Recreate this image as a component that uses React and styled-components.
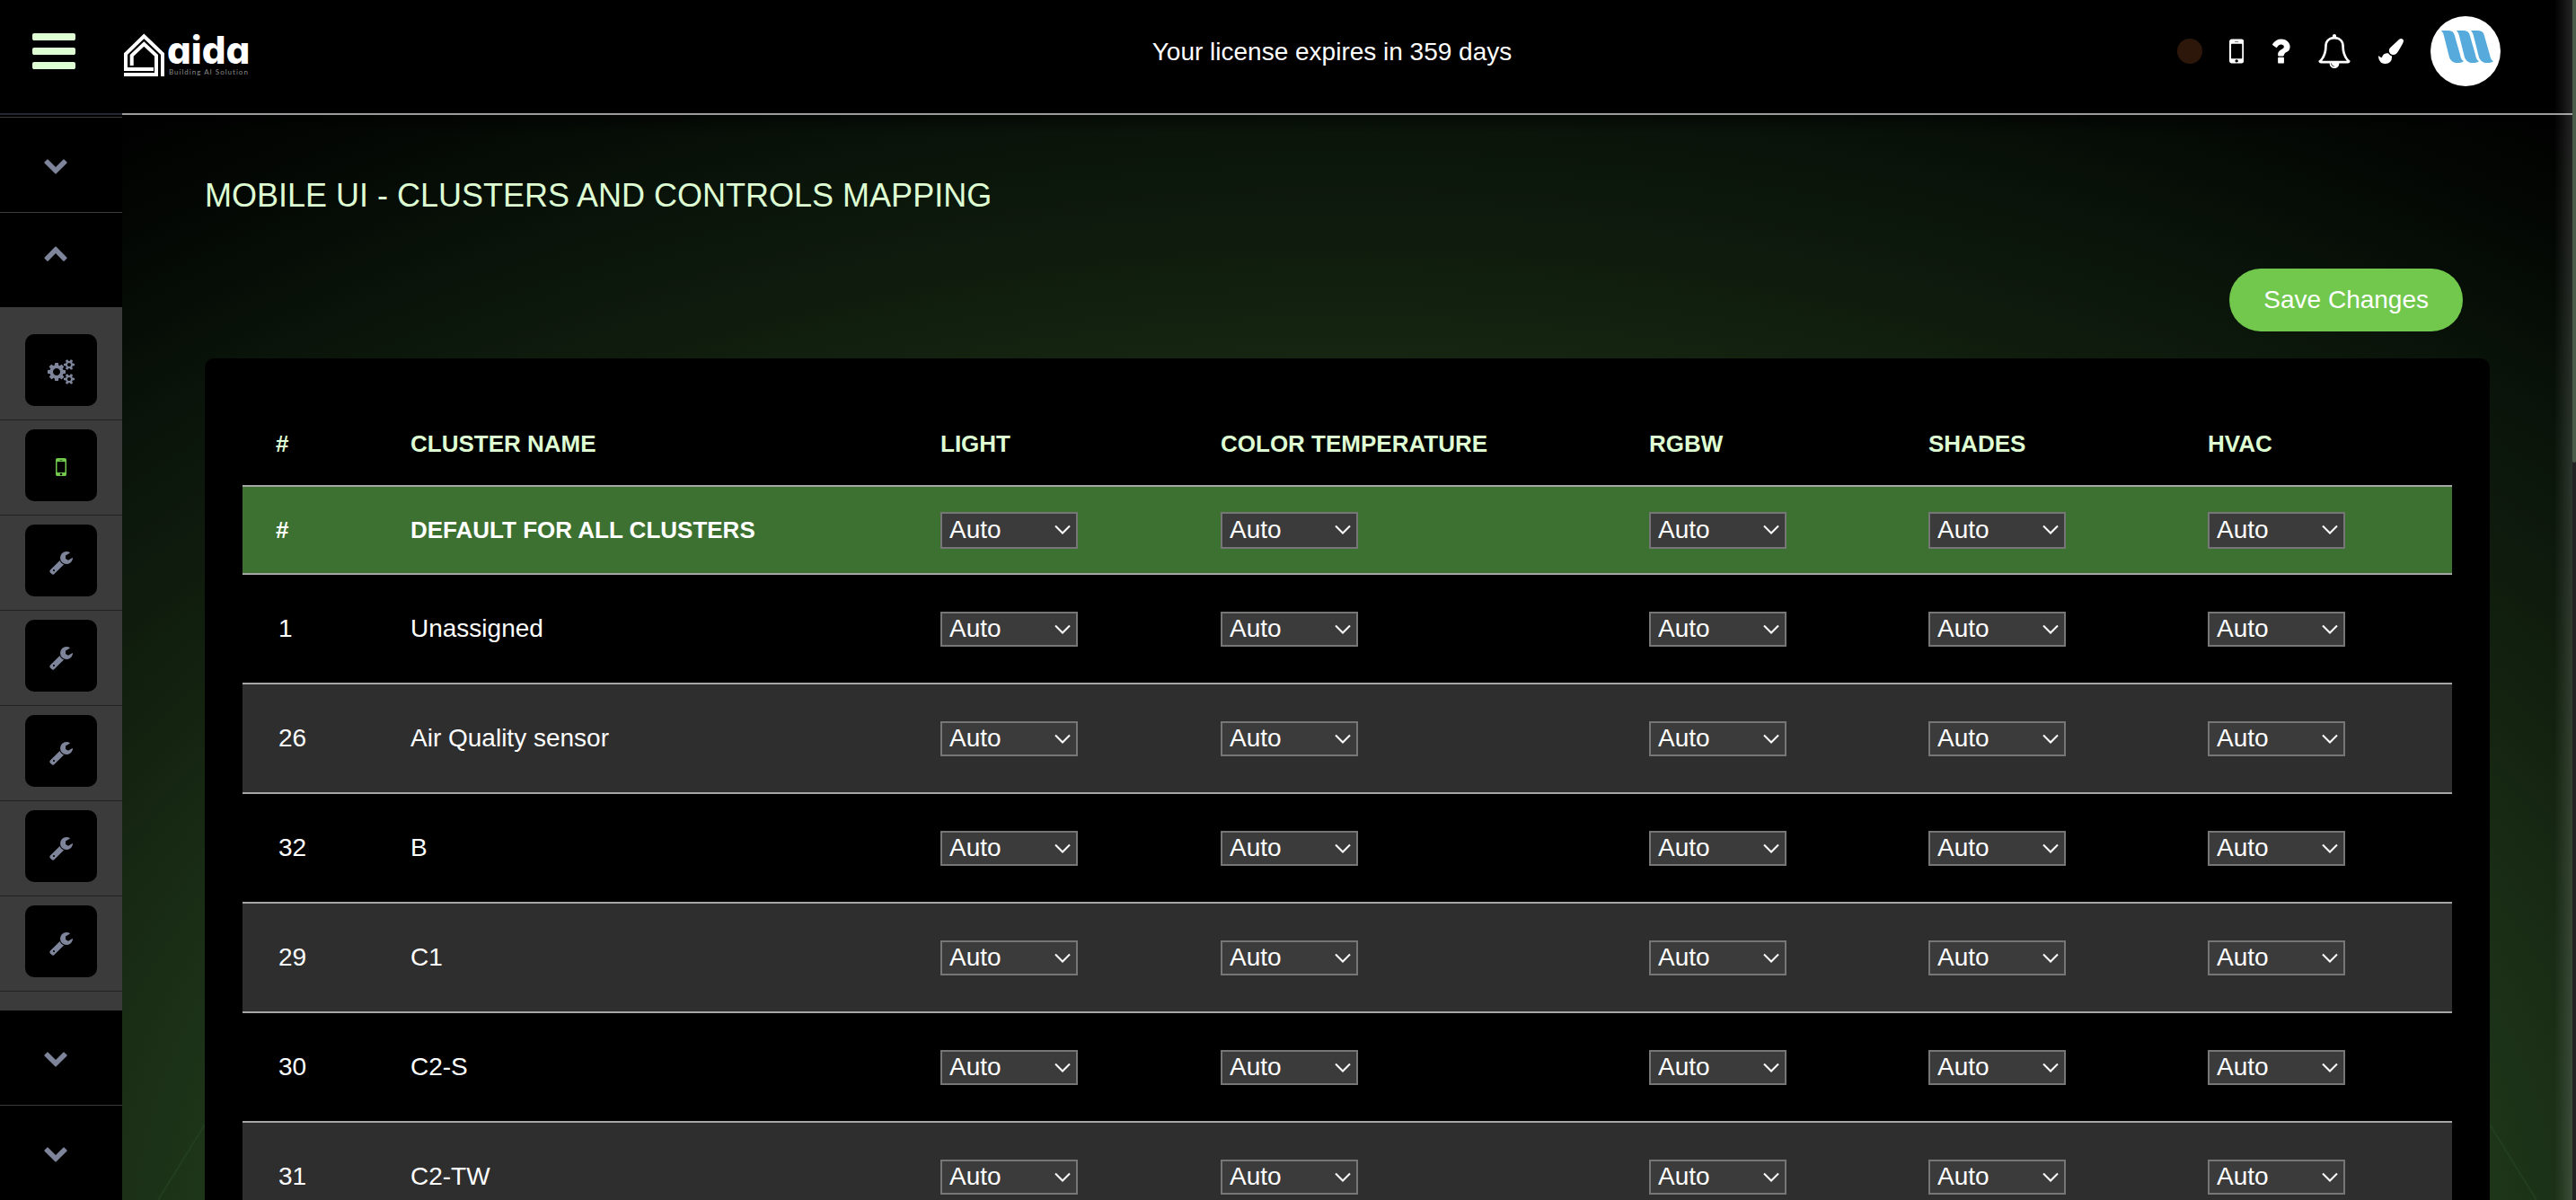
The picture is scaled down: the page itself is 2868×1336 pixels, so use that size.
import React from 'react';
import styled, { createGlobalStyle, css } from 'styled-components';

const GlobalStyle = createGlobalStyle`
  *, *::before, *::after { box-sizing: border-box; }
  body {
    margin: 0;
    background: #000;
    color: #fff;
    font-family: "Liberation Sans", Arial, Helvetica, sans-serif;
    font-size: 28px;
    line-height: 32px;
  }
`;

/* ---------- icons ---------- */

const ICONS = {
  bars: {
    box: '128 0 1536 1792',
    d: 'M1664 1344v128q0 26-19 45t-45 19h-1408q-26 0-45-19t-19-45v-128q0-26 19-45t45-19h1408q26 0 45 19t19 45zm0-512v128q0 26-19 45t-45 19h-1408q-26 0-45-19t-19-45v-128q0-26 19-45t45-19h1408q26 0 45 19t19 45zm0-512v128q0 26-19 45t-45 19h-1408q-26 0-45-19t-19-45v-128q0-26 19-45t45-19h1408q26 0 45 19t19 45z',
  },
  down: {
    box: '0 0 1792 1792',
    d: 'M1683 808l-742 741q-19 19-45 19t-45-19l-742-741q-19-19-19-45.5t19-45.5l166-165q19-19 45-19t45 19l531 531 531-531q19-19 45-19t45 19l166 165q19 19 19 45.5t-19 45.5z',
  },
  up: {
    box: '0 0 1792 1792',
    d: 'M1683 1331l-166 165q-19 19-45 19t-45-19l-531-531-531 531q-19 19-45 19t-45-19l-166-165q-19-19-19-45.5t19-45.5l742-741q19-19 45-19t45 19l742 741q19 19 19 45.5t-19 45.5z',
  },
  mobile: {
    box: '512 0 768 1792',
    d: 'M976 1408q0-33-23.5-56.5t-56.5-23.5-56.5 23.5-23.5 56.5 23.5 56.5 56.5 23.5 56.5-23.5 23.5-56.5zm208-160v-704q0-13-9.5-22.5t-22.5-9.5h-512q-13 0-22.5 9.5t-9.5 22.5v704q0 13 9.5 22.5t22.5 9.5h512q13 0 22.5-9.5t9.5-22.5zm-192-848q0-16-16-16h-160q-16 0-16 16t16 16h160q16 0 16-16zm288-16v1024q0 52-38 90t-90 38h-512q-52 0-90-38t-38-90v-1024q0-52 38-90t90-38h512q52 0 90 38t38 90z',
  },
  question: {
    box: '384 0 1024 1792',
    d: 'M1088 1256v240q0 16-12 28t-28 12h-240q-16 0-28-12t-12-28v-240q0-16 12-28t28-12h240q16 0 28 12t12 28zm316-600q0 54-15.5 101t-35 76.5-55 59.5-57.5 43.5-61 35.5q-41 23-68.5 65t-27.5 67q0 17-12 32.5t-28 15.5h-240q-15 0-25.5-18.5t-10.5-37.5v-45q0-83 65-156.5t143-108.5q59-27 84-56t25-76q0-42-46.5-74t-107.5-32q-65 0-108 29-35 25-107 115-13 16-31 16-12 0-25-8l-164-125q-13-10-15.5-25t5.5-28q160-266 464-266 80 0 161 31t146 83 106 127.5 41 158.5z',
  },
  bell: {
    box: '0 0 1792 1792',
    d: 'M912 1696q0-16-16-16-59 0-101.5-42.5t-42.5-101.5q0-16-16-16t-16 16q0 73 51.5 124.5t124.5 51.5q16 0 16-16zm-666-288h1300q-266-300-266-832 0-51-24-105t-69-103-121.5-80.5-169.5-31.5-169.5 31.5-121.5 80.5-69 103-24 105q0 532-266 832zm1482 0q0 52-38 90t-90 38h-448q0 106-75 181t-181 75-181-75-75-181h-448q-52 0-90-38t-38-90q50-42 91-88t85-119.5 74.5-158.5 50-206 19.5-260q0-152 117-282.5t307-158.5q-8-19-8-39 0-40 28-68t68-28 68 28 28 68q0 20-8 39 190 28 307 158.5t117 282.5q0 139 19.5 260t50 206 74.5 158.5 85 119.5 91 88z',
  },
  brush: {
    box: '0 0 1792 1792',
    d: 'M1615 0q70 0 122.5 46.5t52.5 116.5q0 63-45 151-332 629-465 752-97 91-218 91-126 0-216.5-92.5t-90.5-219.5q0-128 92-212l638-579q59-54 130-54zm-909 1034q39 76 106.5 130t150.5 76l1 71q4 213-129.5 347t-348.5 134q-123 0-218-46.5t-152.5-127.5-86.5-183-29-220q7 5 41 30t62 44.5 59 36.5 46 17q41 0 55-37 25-66 57.5-112.5t69.5-76 88-47.5 103-25.5 125-10.5z',
  },
  wrench: {
    box: '0 0 1792 1792',
    d: 'M448 1472q0-26-19-45t-45-19-45 19-19 45 19 45 45 19 45-19 19-45zm644-420l-682 682q-37 37-90 37-52 0-91-37l-106-108q-38-36-38-90 0-53 38-91l681-681q39 98 114.5 173.5t173.5 114.5zm634-435q0 39-23 106-47 134-164.5 217.5t-258.5 83.5q-185 0-316.5-131.5t-131.5-316.5 131.5-316.5 316.5-131.5q58 0 121.5 16.5t107.5 46.5q16 11 16 28t-16 28l-293 169v224l193 107q5-3 79-48.5t135.5-81 70.5-35.5q15 0 23.5 10t8.5 25z',
  },
  cogs: {
    box: '-64 0 1920 1792',
    d: 'M832 896q0-106-75-181t-181-75-181 75-75 181 75 181 181 75 181-75 75-181zm768 512q0-52-38-90t-90-38-90 38-38 90q0 53 37.5 90.5t90.5 37.5 90.5-37.5 37.5-90.5zm0-1024q0-52-38-90t-90-38-90 38-38 90q0 53 37.5 90.5t90.5 37.5 90.5-37.5 37.5-90.5zm-384 421v185q0 10-7 19.5t-16 10.5l-155 24q-11 35-32 76 34 48 90 115 7 11 7 20 0 12-7 19-23 30-82.5 89.5t-78.5 59.5q-11 0-21-7l-115-90q-37 19-77 31-11 108-23 155-7 24-30 24h-186q-11 0-20-7.5t-10-17.5l-23-153q-34-10-75-31l-118 89q-7 7-20 7-11 0-21-8-144-133-144-160 0-9 7-19 10-14 41-53t47-61q-23-44-35-82l-152-24q-10-1-17-9.5t-7-19.5v-185q0-10 7-19.5t16-10.5l155-24q11-35 32-76-34-48-90-115-7-11-7-20 0-12 7-20 22-30 82-89t79-59q11 0 21 7l115 90q34-18 77-32 11-108 23-154 7-24 30-24h186q11 0 20 7.5t10 17.5l23 153q34 10 75 31l118-89q8-7 20-7 11 0 21 8 144 133 144 160 0 8-7 19-12 16-42 54t-45 60q23 48 34 82l152 23q10 2 17 10.5t7 19.5zm640 533v140q0 16-149 31-12 27-30 52 51 113 51 138 0 4-4 7-122 71-124 71-8 0-46-47t-52-68q-20 2-30 2t-30-2q-14 21-52 68t-46 47q-2 0-124-71-4-3-4-7 0-25 51-138-18-25-30-52-149-15-149-31v-140q0-16 149-31 13-29 30-52-51-113-51-138 0-4 4-7 4-2 35-20t59-34 30-16q8 0 46 46.5t52 67.5q20-2 30-2t30 2q51-71 92-112l6-2q4 0 124 70 4 3 4 7 0 25-51 138 17 23 30 52 149 15 149 31zm0-1024v140q0 16-149 31-12 27-30 52 51 113 51 138 0 4-4 7-122 71-124 71-8 0-46-47t-52-68q-20 2-30 2t-30-2q-14 21-52 68t-46 47q-2 0-124-71-4-3-4-7 0-25 51-138-18-25-30-52-149-15-149-31v-140q0-16 149-31 13-29 30-52-51-113-51-138 0-4 4-7 4-2 35-20t59-34 30-16q8 0 46 46.5t52 67.5q20-2 30-2t30 2q51-71 92-112l6-2q4 0 124 70 4 3 4 7 0 25-51 138 17 23 30 52 149 15 149 31z',
  },
};

const Glyph = styled.svg`
  display: block;
  flex: none;
  height: ${(p) => p.$size}px;
  fill: currentColor;
`;

function Icon({ name, size = 28 }) {
  const icon = ICONS[name];
  return (
    <Glyph viewBox={icon.box} $size={size} aria-hidden="true">
      <path d={icon.d} />
    </Glyph>
  );
}

/* ---------- page frame ---------- */

const Page = styled.div`
  display: flex;
  height: 100vh;
  overflow: hidden;
`;

const iconButton = css`
  display: flex;
  align-items: center;
  padding: 0;
  border: 0;
  background: none;
  color: inherit;
  font: inherit;
  cursor: pointer;
`;

/* ---------- sidebar ---------- */

const Sidebar = styled.nav`
  flex: none;
  width: 136px;
  background: #000;
`;

const MenuBar = styled.div`
  display: flex;
  align-items: center;
  justify-content: center;
  height: 128px;
  padding: 0 16px 12px 0;
  border-bottom: 2px solid #242732;
  color: #dffdd3;
`;

const MenuButton = styled.button`
  ${iconButton}
`;

const Groups = styled.div`
  margin-top: 2px;
  border-top: 1px solid #3b3b3b;
`;

const Group = styled.button`
  ${iconButton}
  align-items: flex-start;
  width: 100%;
  height: ${(p) => (p.$open ? 105 : 106)}px;
  padding: ${(p) => (p.$open ? 30 : 38)}px 0 0 48px;
  border-bottom: ${(p) => (p.$open ? 0 : 1)}px solid #3b3b3b;
  color: #7e859b;
`;

const SubMenu = styled.ul`
  margin: 0;
  padding: 20px 0 21px;
  list-style: none;
  background: #3b3b3b;
`;

const SubItem = styled.li`
  display: flex;
  justify-content: center;
  padding: 10px 0 15px;
  border-bottom: 1px solid #222;
`;

const Tile = styled.a`
  display: flex;
  align-items: center;
  justify-content: center;
  width: 80px;
  height: 80px;
  padding-top: 4px;
  border-radius: 10px;
  background: #000;
  color: ${(p) => (p.$active ? '#71c84d' : '#7e859b')};
`;

/* ---------- main column ---------- */

const Main = styled.div`
  position: relative;
  display: flex;
  flex-direction: column;
  flex: 1;
  min-width: 0;
  background: radial-gradient(
    ellipse 2387px 1550px at 50% 1400px,
    #243f1e 30%,
    #1e361a 53%,
    #152511 65%,
    #0f1c0d 73%,
    #0a140a 82%,
    #050b05 89%,
    #000 100%
  );

  &::after {
    content: '';
    position: absolute;
    inset: 0 0 0 auto;
    width: 20px;
    background: linear-gradient(to right, transparent, rgba(255, 255, 255, 0.14));
    pointer-events: none;
  }
`;

const Header = styled.header`
  display: grid;
  grid-template-columns: 406px 1fr 440px;
  align-items: center;
  height: 128px;
  padding-bottom: 12px;
  border-bottom: 2px solid #9c9c9c;
  background: #000;
`;

const Logo = styled.a`
  display: flex;
  align-items: flex-start;
  gap: 3px;
  padding: 8px 0 0 2px;
  color: #fff;
  text-decoration: none;
`;

const LogoText = styled.span`
  display: flex;
  flex-direction: column;
`;

const LogoName = styled.span`
  font: 800 42px/38px Inter, "Liberation Sans", sans-serif;
  font-feature-settings: 'cv11', 'ss04';
`;

const LogoTag = styled.span`
  padding-left: 2px;
  color: #8a8a8a;
  font: 400 8px/10px Lato, "Liberation Sans", sans-serif;
  letter-spacing: 1px;
`;

const License = styled.p`
  margin: 0;
  padding-top: 2px;
  text-align: center;
`;

const Tools = styled.div`
  display: flex;
  align-items: center;
  gap: 30px;
`;

const StatusDot = styled.span`
  width: 28px;
  height: 28px;
  border-radius: 50%;
  background: #2d170a;
`;

const Tool = styled.button`
  ${iconButton}
`;

const Avatar = styled.button`
  ${iconButton}
  width: 78px;
  height: 78px;
  border-radius: 50%;
  background: #fff;
  fill: #56abdc;
`;

const Content = styled.main`
  position: relative;
  flex: 1;
  min-height: 0;
  padding: 68px 92px 0;
  overflow: hidden;
  background: linear-gradient(rgba(0, 0, 0, 0.5), transparent 20px);
`;

const Ray = styled.svg`
  position: absolute;
  bottom: 0;
  ${(p) => p.$side}: 0;
  width: 92px;
  height: 84px;
  stroke: #223e1f;
  stroke-width: 2;
`;

const Title = styled.h1`
  margin: 0;
  color: #dffdd3;
  font-size: 36px;
  font-weight: 400;
  line-height: 44px;
`;

const Actions = styled.div`
  display: flex;
  justify-content: flex-end;
  padding: 59px 30px 30px;
`;

const SaveButton = styled.button`
  height: 70px;
  padding: 0 38px;
  border: 0;
  border-radius: 35px;
  background: #71c84d;
  color: #fff;
  font: inherit;
  cursor: pointer;
`;

const Panel = styled.section`
  position: relative;
  padding: 49px 42px 42px;
  border-radius: 10px;
  background: #000;
`;

const Table = styled.table`
  width: 100%;
  border-collapse: separate;
  border-spacing: 0;
  table-layout: fixed;
  text-align: left;
`;

const HeadCell = styled.th`
  height: 92px;
  padding: 0 0 0 37px;
  color: #dffdd3;
  font-size: 26px;
  white-space: nowrap;
`;

const Row = styled.tr`
  background: ${(p) => p.$bg};
`;

const Cell = styled.td`
  height: ${(p) => (p.$default ? 98 : 122)}px;
  padding: 0 0 0 ${(p) => (p.$number ? 40 : 37)}px;
  border-top: 2px solid #a6a6a6;
  font-size: ${(p) => (p.$default ? 26 : 28)}px;
  font-weight: ${(p) => (p.$default ? 700 : 400)};
  vertical-align: middle;
`;

const SelectBox = styled.div`
  position: relative;
  width: 153px;
`;

const Select = styled.select`
  display: block;
  width: 100%;
  height: ${(p) => (p.$tall ? 41 : 39)}px;
  padding: 0 8px;
  border: 2px solid #767676;
  border-radius: 0;
  background: #3b3b3b;
  color: #fff;
  font: 400 28px/32px "Liberation Sans", Arial, sans-serif;
  appearance: none;
`;

const Caret = styled.svg`
  position: absolute;
  top: 14px;
  right: 8px;
  width: 18px;
  height: 12px;
  fill: none;
  stroke: #fff;
  stroke-width: 2;
  pointer-events: none;
`;

const Scrollbar = styled.div`
  flex: none;
  width: 4px;
  background: #232323;
`;

const Thumb = styled.div`
  height: 515px;
  border-radius: 0 0 4px 4px;
  background: #4a5c49;
`;

/* ---------- data ---------- */

const COLUMNS = [
  { label: '#', width: 150 },
  { label: 'CLUSTER NAME', width: 590 },
  { label: 'LIGHT', width: 312 },
  { label: 'COLOR TEMPERATURE', width: 477 },
  { label: 'RGBW', width: 311 },
  { label: 'SHADES', width: 311 },
  { label: 'HVAC', width: 309 },
];
const TOTAL = COLUMNS.reduce((sum, c) => sum + c.width, 0);
const CONTROLS = COLUMNS.slice(2).map((c) => c.label);

const CLUSTERS = [
  { id: 1, name: 'Unassigned' },
  { id: 26, name: 'Air Quality sensor' },
  { id: 32, name: 'B' },
  { id: 29, name: 'C1' },
  { id: 30, name: 'C2-S' },
  { id: 31, name: 'C2-TW' },
];

const SUB_MENU = [
  { icon: 'cogs', label: 'Settings' },
  { icon: 'mobile', label: 'Mobile UI', active: true },
  { icon: 'wrench', label: 'Tool 1' },
  { icon: 'wrench', label: 'Tool 2' },
  { icon: 'wrench', label: 'Tool 3' },
  { icon: 'wrench', label: 'Tool 4' },
  { icon: 'wrench', label: 'Tool 5' },
];

const TOOLS = [
  { icon: 'mobile', label: 'Mobile', size: 38 },
  { icon: 'question', label: 'Help', size: 38 },
  { icon: 'bell', label: 'Notifications', size: 38 },
  { icon: 'brush', label: 'Theme', size: 28 },
];

/* ---------- parts ---------- */

function ControlSelect({ label, tall }) {
  return (
    <SelectBox>
      <Select aria-label={label} defaultValue="auto" $tall={tall}>
        <option value="auto">Auto</option>
      </Select>
      <Caret viewBox="0 0 18 12" aria-hidden="true">
        <path d="M1 1.5 9 9.5 17 1.5" />
      </Caret>
    </SelectBox>
  );
}

function House() {
  return (
    <svg width="45" height="48" viewBox="0 0 45 48" fill="none" stroke="#fff" strokeWidth="4" aria-hidden="true">
      <path d="M43 48V23L22.3 3.2 2 23V40H33" />
      <path d="M8.7 36V24.8L22.3 12 36 24.8V46H0" />
    </svg>
  );
}

function AvatarMark() {
  const stroke = 'M12 16H20Q26 16 27 22L33 43Q34 49 37 50Q35 52 30 52H28Q23 51 21 46L15 22Q14 18 12 16Z';
  return (
    <svg width="78" height="78" viewBox="0 0 78 78" aria-hidden="true">
      <path d={stroke} />
      <path d={stroke} transform="translate(17 0)" />
      <path d={stroke} transform="translate(33 0)" />
    </svg>
  );
}

export default function App() {
  return (
    <>
      <GlobalStyle />
      <Page>
        <Sidebar>
          <MenuBar>
            <MenuButton aria-label="Menu">
              <Icon name="bars" size={56} />
            </MenuButton>
          </MenuBar>
          <Groups>
            <Group aria-label="Expand group">
              <Icon name="down" />
            </Group>
            <Group $open aria-label="Collapse group">
              <Icon name="up" />
            </Group>
            <SubMenu>
              {SUB_MENU.map((item) => (
                <SubItem key={item.label}>
                  <Tile href="#" aria-label={item.label} $active={item.active}>
                    <Icon name={item.icon} />
                  </Tile>
                </SubItem>
              ))}
            </SubMenu>
            <Group aria-label="Expand group">
              <Icon name="down" />
            </Group>
            <Group aria-label="Expand group">
              <Icon name="down" />
            </Group>
          </Groups>
        </Sidebar>

        <Main>
          <Header>
            <Logo href="#">
              <House />
              <LogoText>
                <LogoName>aida</LogoName>
                <LogoTag>Building AI Solution</LogoTag>
              </LogoText>
            </Logo>
            <License>Your license expires in 359 days</License>
            <Tools>
              <StatusDot />
              {TOOLS.map((tool) => (
                <Tool key={tool.icon} aria-label={tool.label}>
                  <Icon name={tool.icon} size={tool.size} />
                </Tool>
              ))}
              <Avatar aria-label="Account">
                <AvatarMark />
              </Avatar>
            </Tools>
          </Header>

          <Content>
            <Ray $side="left" viewBox="0 0 92 84" aria-hidden="true">
              <path d="M92 0 40 84" />
            </Ray>
            <Ray $side="right" viewBox="0 0 92 84" aria-hidden="true">
              <path d="M0 0 52 84" />
            </Ray>
            <Title>MOBILE UI - CLUSTERS AND CONTROLS MAPPING</Title>
            <Actions>
              <SaveButton>Save Changes</SaveButton>
            </Actions>
            <Panel>
              <Table>
                <colgroup>
                  {COLUMNS.map((c) => (
                    <col key={c.label} style={{ width: `${(c.width / TOTAL) * 100}%` }} />
                  ))}
                </colgroup>
                <thead>
                  <tr>
                    {COLUMNS.map((c) => (
                      <HeadCell key={c.label} scope="col">
                        {c.label}
                      </HeadCell>
                    ))}
                  </tr>
                </thead>
                <tbody>
                  <Row $bg="#3d7131">
                    <Cell $default>#</Cell>
                    <Cell $default>DEFAULT FOR ALL CLUSTERS</Cell>
                    {CONTROLS.map((control) => (
                      <Cell key={control} $default>
                        <ControlSelect label={`Default ${control}`} tall />
                      </Cell>
                    ))}
                  </Row>
                  {CLUSTERS.map((cluster, i) => (
                    <Row key={cluster.id} $bg={i % 2 ? '#2e2e2e' : '#000'}>
                      <Cell $number>{cluster.id}</Cell>
                      <Cell>{cluster.name}</Cell>
                      {CONTROLS.map((control) => (
                        <Cell key={control}>
                          <ControlSelect label={`${cluster.name} ${control}`} />
                        </Cell>
                      ))}
                    </Row>
                  ))}
                </tbody>
              </Table>
            </Panel>
          </Content>
        </Main>
        <Scrollbar>
          <Thumb />
        </Scrollbar>
      </Page>
    </>
  );
}
